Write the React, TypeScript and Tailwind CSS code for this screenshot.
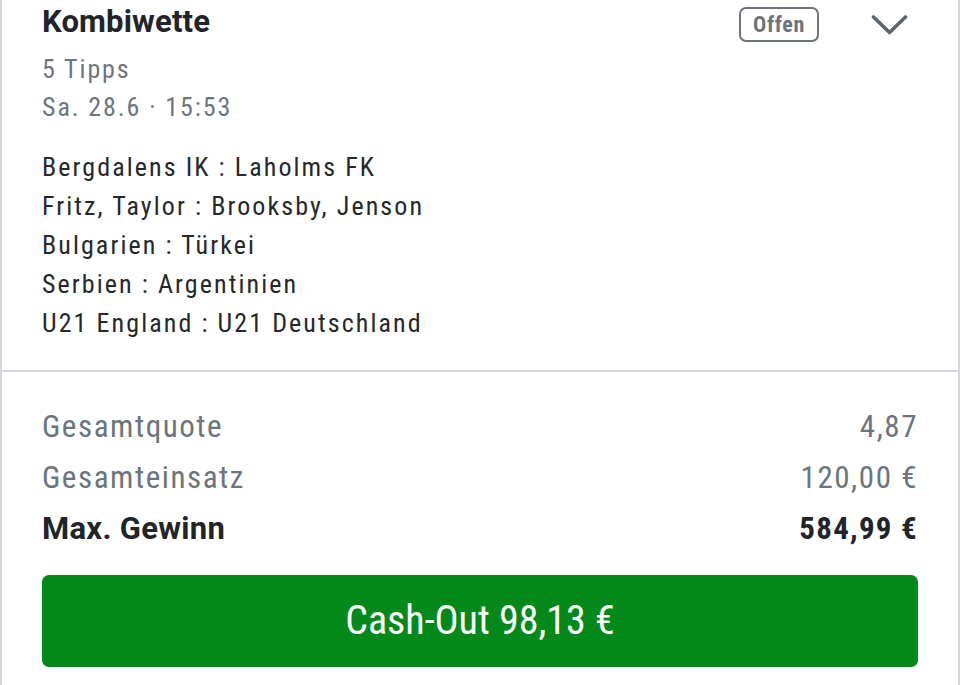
const matches = [
  'Bergdalens IK : Laholms FK',
  'Fritz, Taylor : Brooksby, Jenson',
  'Bulgarien : Türkei',
  'Serbien : Argentinien',
  'U21 England : U21 Deutschland',
];

export default function App() {
  return (
    <div className="h-[685px] w-[960px] overflow-hidden bg-white font-['Roboto',sans-serif] font-stretch-[87.5%]">
      <div className="h-full border-x-2 border-[#d3d7dc]">
        {/* Header */}
        <div className="px-[40px] pt-[3px] pb-[27px]">
          <div className="flex items-start justify-between">
            <div>
              <h1 className="text-[31px] leading-[38px] font-bold font-stretch-[100%] tracking-[0.005em] text-[#212529]">Kombiwette</h1>
              <p className="mt-[9px] text-[26px] leading-[38px] tracking-[0.073em] text-[#6c757d]">5 Tipps</p>
              <p className="text-[26px] leading-[38px] tracking-[0.073em] text-[#6c757d]">Sa. 28.6 · 15:53</p>
            </div>
            <div className="flex items-start pt-[4px]">
              <span className="flex h-[35px] w-[80px] items-center justify-center rounded-[7px] border-2 border-[#6c737c] text-[22px] font-bold tracking-[0.03em] text-[#6c737c]">
                Offen
              </span>
              <svg className="mt-[7px] ml-[52px] mr-[10px]" width="37" height="22" viewBox="0 0 37 22" fill="none">
                <polyline
                  points="2.5,3 18.5,18.5 34.5,3"
                  stroke="#5d646d"
                  strokeWidth="3.6"
                  strokeLinecap="round"
                  strokeLinejoin="round"
                />
              </svg>
            </div>
          </div>

          <div className="mt-[22px] text-[26px] leading-[39px] tracking-[0.08em] text-[#25282b]">
            {matches.map((m) => (
              <p key={m}>{m}</p>
            ))}
          </div>
        </div>

        <div className="h-[2px] bg-[#d5d9dd]" />

        {/* Summary */}
        <div className="px-[40px] pt-[29px]">
          <div className="flex justify-between text-[31px] leading-[51px] tracking-[0.05em] text-[#6c757d]">
            <span>Gesamtquote</span>
            <span>4,87</span>
          </div>
          <div className="flex justify-between text-[31px] leading-[51px] tracking-[0.05em] text-[#6c757d]">
            <span>Gesamteinsatz</span>
            <span>120,00 €</span>
          </div>
          <div className="flex justify-between text-[31px] leading-[51px] font-bold text-[#212529]">
            <span className="font-stretch-[100%] tracking-[0.01em]">Max. Gewinn</span>
            <span className="font-stretch-[80%] tracking-[0.04em]">584,99 €</span>
          </div>

          <button className="mt-[21px] flex h-[92px] w-full items-center justify-center rounded-[7px] bg-[#02891a] text-[40px] font-stretch-[75%] text-white">
            Cash-Out 98,13 €
          </button>
        </div>
      </div>
    </div>
  );
}
